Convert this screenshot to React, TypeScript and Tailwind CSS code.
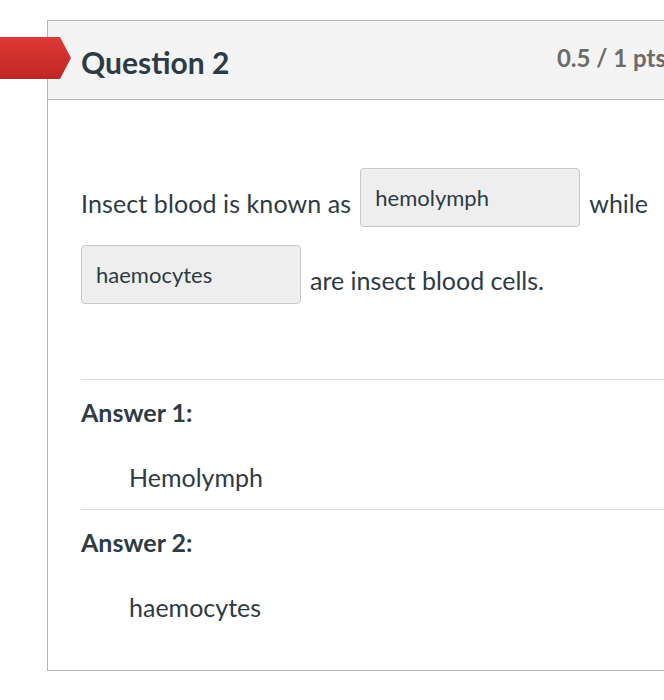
export default function App() {
  const answers = [
    { label: 'Answer 1:', value: 'Hemolymph' },
    { label: 'Answer 2:', value: 'haemocytes' },
  ];

  return (
    <div
      className="relative h-[700px] w-[664px] overflow-hidden bg-white text-[#2d3b45]"
      style={{ fontFamily: 'Lato, "Noto Sans", sans-serif' }}
    >
      <div className="ml-[47px] mt-[20px] w-[680px] border border-[#b4b4b4] bg-white">
        <div className="flex h-[79px] items-center justify-between border-b border-[#b4b4b4] bg-[#f4f4f4] pl-[33px] pr-[60px] pt-[5px]">
          <h2 className="text-[30px] font-bold">Question 2</h2>
          <span className="pb-[10px] text-[24px] font-bold text-[#6b6b6b]">0.5 / 1 pts</span>
        </div>

        <div className="px-[33px] pb-[31px] pt-[68px]">
          <div className="flex w-[590px] flex-wrap items-center gap-x-[9px] gap-y-[18px] text-[25px]">
            <span className="pt-[12px] tracking-[0.1px]">Insect blood is known as</span>
            <span className="flex h-[59px] w-[220px] items-center rounded-[4px] border border-[#c8c8c8] bg-[#eeeeee] px-[14px] text-[22px]">
              hemolymph
            </span>
            <span className="pt-[12px]">while</span>
            <span className="flex h-[59px] w-[220px] items-center rounded-[4px] border border-[#c8c8c8] bg-[#eeeeee] px-[14px] text-[22px]">
              haemocytes
            </span>
            <span className="pt-[12px]">are insect blood cells.</span>
          </div>

          <div className="mt-[75px]">
            {answers.map((a) => (
              <div key={a.label} className="border-t border-[#dcdcdc]">
                <div className="flex h-[66px] items-center text-[25px] font-bold">{a.label}</div>
                <div className="flex h-[63px] items-center pl-[48px] text-[25px]">{a.value}</div>
              </div>
            ))}
          </div>
        </div>
      </div>

      <svg className="absolute left-0 top-[37px]" width="72" height="42" viewBox="0 0 72 42">
        <defs>
          <linearGradient id="red" x1="0" y1="0" x2="0" y2="1">
            <stop offset="0" stopColor="#de3a36" />
            <stop offset="1" stopColor="#bf2724" />
          </linearGradient>
        </defs>
        <path d="M0 0 H60 L71 21 L60 42 H0 Z" fill="url(#red)" />
      </svg>
    </div>
  );
}
